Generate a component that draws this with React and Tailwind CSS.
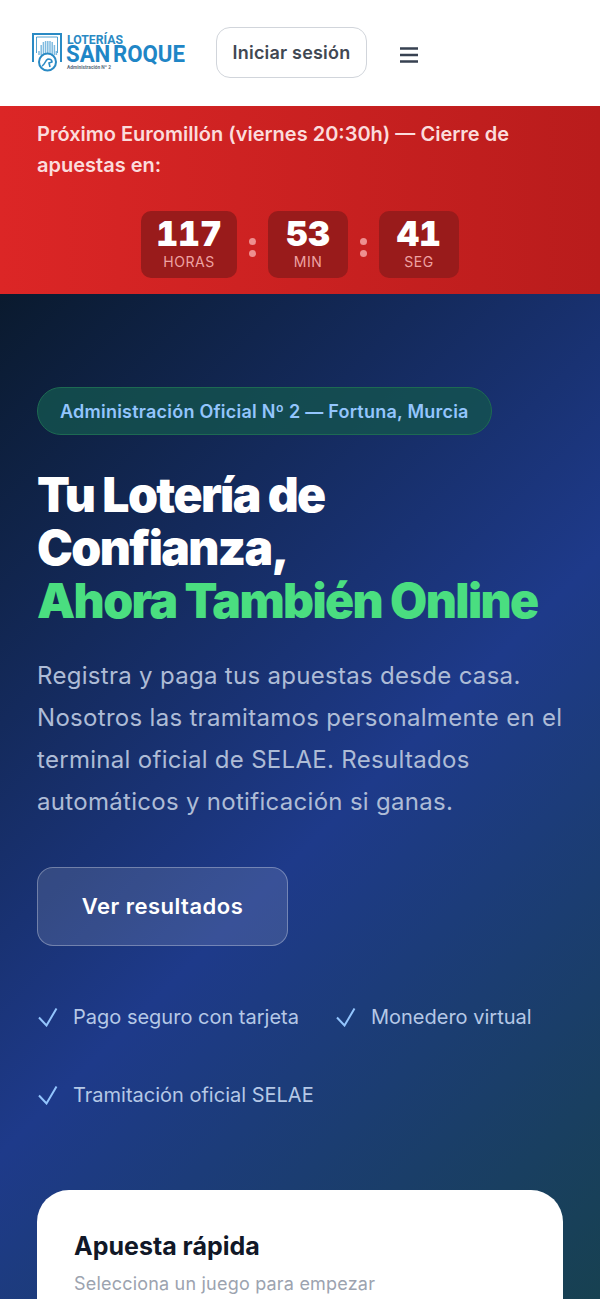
const font = "font-['Inter',sans-serif]";

const Logo = () => (
  <svg width="153" height="40" viewBox="0 0 153 40" className="shrink-0 overflow-visible">
    <path d="M1 29V1h28v28" fill="none" stroke="#2a8ac4" strokeWidth="2" />
    <path d="M4.5 20V4h21v16" fill="none" stroke="#2a8ac4" strokeWidth="0.8" />
    <path d="M7 22v-4M9.2 22V12M11.4 22V9M13.6 22V8M15.8 22V8M18 22V8M20.2 22V9M22.4 22V12M24.4 22v-4" stroke="#7fbbe0" strokeWidth="1.5" fill="none" />
    <circle cx="15.5" cy="29" r="8.5" fill="#fff" stroke="#2a8ac4" strokeWidth="2" />
    <path d="M10 33c3-1 3-6 6-7 2 0 4 1 4 3l-3 1 1 4" fill="none" stroke="#2a8ac4" strokeWidth="1.6" />
    <text x="35" y="10.5" fontFamily="Roboto, sans-serif" fontSize="13" fontWeight="700" fill="#2a8ac4" textLength="56" lengthAdjust="spacingAndGlyphs">LOTERÍAS</text>
    <text x="34" y="29" fontFamily="Roboto, sans-serif" fontSize="24" fontWeight="700" fill="#1f86c6" wordSpacing="-3" textLength="119" lengthAdjust="spacingAndGlyphs">SAN ROQUE</text>
    <text x="35" y="35.5" fontFamily="Roboto, sans-serif" fontSize="5" fontWeight="700" fill="#5b6b7c" textLength="44" lengthAdjust="spacingAndGlyphs">Administración Nº 2</text>
  </svg>
);

const TimeBox = ({ value, label, width }) => (
  <div className={`${width} h-[67px] rounded-[10px] bg-[#991b1b] flex flex-col items-center pt-[5px]`}>
    <span className="text-[34px] leading-[36px] font-black tabular-nums text-white">{value}</span>
    <span className="text-[14px] leading-[20px] tracking-[0.5px] text-[#eea3a3]">{label}</span>
  </div>
);

const Dots = () => (
  <div className="flex flex-col gap-[5px] mt-[5px]">
    <span className="w-[7px] h-[7px] rounded-full bg-[#ee8f8f]" />
    <span className="w-[7px] h-[7px] rounded-full bg-[#ee8f8f]" />
  </div>
);

const Feature = ({ children }) => (
  <div className="flex items-center gap-[15px] h-[24px]">
    <svg width="21" height="20" viewBox="0 0 21 20" fill="none" className="shrink-0">
      <path d="M2 10.5L9.5 18.5L19.5 1.5" stroke="#93c5fd" strokeWidth="2" />
    </svg>
    <span className="text-[20px] text-[#b5c8e6]">{children}</span>
  </div>
);

export default function App() {
  return (
    <div className={`${font} h-[1299px] overflow-hidden bg-white`}>
      <header className="h-[106px] flex items-center pl-[32px]">
        <Logo />
        <button className="ml-[31px] mb-px w-[151px] h-[51px] rounded-[14px] border-[1.5px] border-[#d1d5db] text-[18px] tracking-[0.2px] font-semibold text-[#414853]">
          Iniciar sesión
        </button>
        <svg width="18" height="18" viewBox="0 0 18 18" className="ml-[33px] mt-[4px]">
          <path d="M0 2.5h18M0 9h18M0 15.5h18" stroke="#374151" strokeWidth="2.4" />
        </svg>
      </header>

      <section className="h-[188px] bg-gradient-to-r from-[#dc2626] to-[#b91c1c] px-[37px] pt-[13px]">
        <p className="text-[20px] leading-[31px] font-semibold text-[#fbdcdc]">
          Próximo Euromillón (viernes 20:30h) — Cierre de apuestas en:
        </p>
        <div className="flex justify-center items-center gap-[12px] mt-[30px]">
          <TimeBox value="117" label="HORAS" width="w-[96px]" />
          <Dots />
          <TimeBox value="53" label="MIN" width="w-[80px]" />
          <Dots />
          <TimeBox value="41" label="SEG" width="w-[80px]" />
        </div>
      </section>

      <section className="h-[1120px] overflow-hidden bg-[linear-gradient(135deg,#0a1a2e_0%,#1e3a8a_50%,#164248_100%)] px-[37px] pt-[93px]">
        <div className="inline-flex items-center h-[48px] px-[22px] rounded-full border border-[#1d6a52] bg-[#14544f]/80 text-[18px] tracking-[0.23px] font-semibold text-[#93c5fd]">
          Administración Oficial Nº 2 — Fortuna, Murcia
        </div>
        <h1 className="mt-[33px] text-[48px] leading-[53px] font-black tracking-[-1.6px] text-white">
          Tu Lotería de
          <br />
          Confianza,
          <br />
          <span className="text-[#4ade80]">Ahora También Online</span>
        </h1>
        <p className="mt-[28px] text-[24px] leading-[42px] tracking-[0.3px] text-[#aebcd6]">
          Registra y paga tus apuestas desde casa. Nosotros las tramitamos personalmente en el terminal oficial de SELAE. Resultados automáticos y notificación si ganas.
        </p>
        <button className="mt-[44px] w-[251px] h-[79px] rounded-[16px] border border-white/30 bg-white/12 text-[22px] tracking-[0.5px] font-semibold text-white">
          Ver resultados
        </button>
        <div className="mt-[59px] flex flex-wrap gap-x-[36px] gap-y-[54px]">
          <Feature>Pago seguro con tarjeta</Feature>
          <Feature>Monedero virtual</Feature>
          <Feature>Tramitación oficial SELAE</Feature>
        </div>
        <div className="mt-[83px] h-[400px] rounded-[32px] bg-white px-[37px] pt-[38px]">
          <h2 className="text-[25px] leading-[36px] font-bold text-[#111827]">Apuesta rápida</h2>
          <p className="mt-[7px] text-[18px] leading-[26px] tracking-[0.2px] text-[#9ca3af]">Selecciona un juego para empezar</p>
        </div>
      </section>
    </div>
  );
}
